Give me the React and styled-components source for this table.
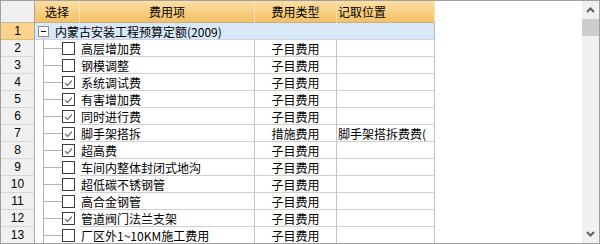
import styled, {createGlobalStyle} from "styled-components";
import React from 'react'

const GlobalStyle = createGlobalStyle`
  body {
    margin: 0;
    background: #fff;
    font-family: "Noto Sans CJK SC", "Liberation Sans", sans-serif;
  }
`;

const Frame = styled.div`
  width: 600px;
  height: 244px;
  box-sizing: border-box;
  border: 1px solid #a0a0a0;
  display: flex;
  overflow: hidden;
  background: #fff;
`;

const Grid = styled.div`
  flex: 1;
  display: grid;
  grid-template-columns: 34px 45px 175px 82px 98px 1fr;
  grid-template-rows: 22px;
  grid-auto-rows: 17px;
  align-content: start;
  font-size: 12px;
  color: #000;
`;

const Corner = styled.div`
  box-sizing: border-box;
  background: #f0f0f0;
  border-right: 1px solid #a8a8a8;
  border-bottom: 1px solid #b8b8b8;
`;

const HeadCell = styled.div`
  box-sizing: border-box;
  display: flex;
  align-items: center;
  justify-content: ${props => props.left ? 'flex-start' : 'center'};
  padding-left: ${props => props.left ? '1px' : '0'};
  background: linear-gradient(#fcdea3, #f3c066);
  border-right: 1px solid #f9e2b8;
  border-bottom: 1px solid #c9b08a;
  line-height: 1;
`;

const Blank = styled.div``;

const NumCell = styled.div`
  box-sizing: border-box;
  display: flex;
  align-items: center;
  justify-content: center;
  font-family: "Liberation Sans", sans-serif;
  font-size: 12px;
  background: ${props => props.active ? '#fbd38b' : '#f0f0f0'};
  border-right: 1px solid #a8a8a8;
  border-bottom: 1px solid ${props => props.active ? '#e0bb78' : '#d6d6d6'};
`;

const GroupCell = styled.div`
  grid-column: span 4;
  box-sizing: border-box;
  display: flex;
  align-items: center;
  background: #d9e8f7;
  border-right: 1px solid #b8b8b8;
  border-bottom: 1px solid #c9d6e4;
  white-space: nowrap;
  overflow: hidden;
`;

const MinusBox = styled.span`
  position: relative;
  box-sizing: border-box;
  width: 11px;
  height: 11px;
  margin: 0 6px 0 3px;
  border: 1px solid #909090;
  background: #fff;
  flex: none;
  &::before {
    content: '';
    position: absolute;
    left: 2px;
    top: 4px;
    width: 5px;
    height: 1px;
    background: #000;
  }
  &::after {
    content: '';
    position: absolute;
    left: 4px;
    top: 10px;
    width: 1px;
    height: 6px;
    background: #b4b4b4;
  }
`;

const Indent = styled.div`
  display: flex;
  align-items: center;
`;

const Branch = styled.span`
  position: relative;
  align-self: stretch;
  width: 18px;
  margin-left: 8px;
  border-left: 1px solid #b4b4b4;
  flex: none;
  &::after {
    content: '';
    position: absolute;
    left: 0;
    right: 0;
    top: 8px;
    height: 1px;
    background: #b4b4b4;
  }
`;

const Check = styled.span`
  box-sizing: border-box;
  width: 13px;
  height: 13px;
  border: 1px solid #3c3c3c;
  background: #fff;
  display: flex;
  align-items: center;
  justify-content: center;
  flex: none;
`;

const Cell = styled.div`
  box-sizing: border-box;
  display: flex;
  align-items: center;
  justify-content: ${props => props.center ? 'center' : 'flex-start'};
  padding-left: ${props => props.center ? '0' : '1px'};
  border-right: 1px solid #c4c4c4;
  border-bottom: 1px solid #d0d0d0;
  white-space: nowrap;
  overflow: hidden;
`;

const ScrollBar = styled.div`
  width: 17px;
  flex: none;
  background: #f0f0f0;
  display: flex;
  flex-direction: column;
  align-items: stretch;
`;

const Arrow = styled.div`
  height: 18px;
  display: flex;
  align-items: center;
  justify-content: center;
`;

const Thumb = styled.div`
  height: 17px;
  background: #cdcdcd;
`;

const Spacer = styled.div`
  flex: 1;
`;

function CheckMark() {
    return (
        <svg width="9" height="8" viewBox="0 0 9 8">
            <polyline points="1,4 3.5,6.5 8,1.5" fill="none" stroke="#7a7a7a" strokeWidth="1.3"/>
        </svg>
    )
}

function Chevron({down}) {
    return (
        <svg width="9" height="6" viewBox="0 0 9 6">
            <polyline points={down ? "1,1 4.5,4.5 8,1" : "1,5 4.5,1.5 8,5"} fill="none" stroke="#606060" strokeWidth="2"/>
        </svg>
    )
}

const rows = [
    {name: "高层增加费", checked: false, type: "子目费用"},
    {name: "钢模调整", checked: false, type: "子目费用"},
    {name: "系统调试费", checked: true, type: "子目费用"},
    {name: "有害增加费", checked: true, type: "子目费用"},
    {name: "同时进行费", checked: true, type: "子目费用"},
    {name: "脚手架搭拆", checked: true, type: "措施费用", place: "脚手架搭拆费费("},
    {name: "超高费", checked: true, type: "子目费用"},
    {name: "车间内整体封闭式地沟", checked: false, type: "子目费用"},
    {name: "超低碳不锈钢管", checked: false, type: "子目费用"},
    {name: "高合金钢管", checked: false, type: "子目费用"},
    {name: "管道阀门法兰支架", checked: true, type: "子目费用"},
    {name: "厂区外1~10KM施工费用", checked: false, type: "子目费用"},
];

export default function App() {
    return (
        <>
            <GlobalStyle/>
            <Frame>
                <Grid>
                    <Corner/>
                    <HeadCell>选择</HeadCell>
                    <HeadCell>费用项</HeadCell>
                    <HeadCell>费用类型</HeadCell>
                    <HeadCell left>记取位置</HeadCell>
                    <Blank/>

                    <NumCell active>1</NumCell>
                    <GroupCell>
                        <MinusBox/>
                        内蒙古安装工程预算定额(2009)
                    </GroupCell>
                    <Blank/>

                    {rows.map((row, index) => (
                        <React.Fragment key={index}>
                            <NumCell>{index + 2}</NumCell>
                            <Indent>
                                <Branch/>
                                <Check>{row.checked && <CheckMark/>}</Check>
                            </Indent>
                            <Cell>{row.name}</Cell>
                            <Cell center>{row.type}</Cell>
                            <Cell>{row.place}</Cell>
                            <Blank/>
                        </React.Fragment>
                    ))}
                </Grid>
                <ScrollBar>
                    <Arrow><Chevron/></Arrow>
                    <Thumb/>
                    <Spacer/>
                    <Arrow><Chevron down/></Arrow>
                </ScrollBar>
            </Frame>
        </>
    )
}
